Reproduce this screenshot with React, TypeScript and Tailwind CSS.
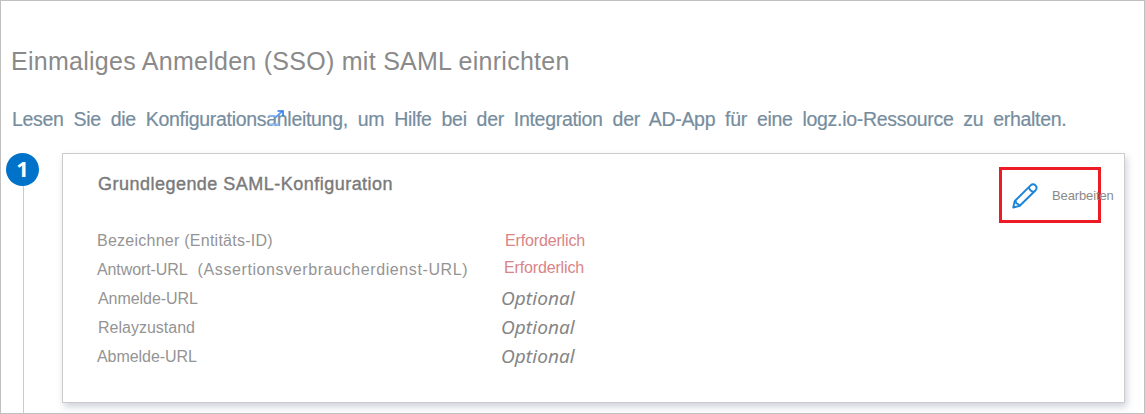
import React from "react";

const rows = [
  { parts: [{ text: "Bezeichner (Entitäts-ID)", className: "tracking-[0.25px]" }], labelClass: "", value: "Erforderlich", required: true, valueClass: "left-px" },
  {
    parts: [
      { text: "Antwort-URL  ", className: "tracking-[-0.1px] [word-spacing:1px]" },
      { text: "(Assertionsverbraucherdienst-URL)", className: "tracking-[0.6px]" },
    ],
    labelClass: "",
    value: "Erforderlich",
    required: true,
    valueClass: "-top-[2px]",
  },
  { parts: [{ text: "Anmelde-URL", className: "tracking-[-0.05px]" }], labelClass: "left-px", value: "Optional", required: false, valueClass: "" },
  { parts: [{ text: "Relayzustand", className: "" }], labelClass: "left-px", value: "Optional", required: false, valueClass: "" },
  { parts: [{ text: "Abmelde-URL", className: "tracking-[-0.05px]" }], labelClass: "", value: "Optional", required: false, valueClass: "" },
];

function PencilIcon() {
  return (
    <svg width="26" height="26" viewBox="0 0 26 26" fill="none" stroke="#1a84d8" strokeWidth="1.9" strokeLinejoin="round">
      <path d="M1.2 24.6 2.8 18 18.6 2.4Q21 .2 23.6 2.4 25.6 4.8 23.6 7.2L7.8 22.8Z" />
      <path d="M2.8 18Q4.3 18.6 4.4 20.4 6.6 20.8 7.8 22.8M16.8 4.2Q17.8 8 21.8 9" />
    </svg>
  );
}

function LinkArrow() {
  return (
    <svg className="absolute top-[108px] left-[266px]" width="18" height="18" viewBox="0 0 18 18" fill="none">
      <path d="M1.5 6.8H8.5M2 15.5H12" stroke="#8ab8f8" strokeWidth="1.8" />
      <path d="M8 8.8 15.5 2" stroke="#5b9df5" strokeWidth="1.8" />
      <path d="M10.5 2H16V7.5" stroke="#2a7be8" strokeWidth="1.6" />
    </svg>
  );
}

export default function App() {
  return (
    <div className="relative flex h-[414px] w-[1145px] flex-col overflow-hidden border border-[#c0c0c0] bg-white font-['Liberation_Sans',Arial,sans-serif] whitespace-nowrap">
      <h1 className="mt-[44px] ml-[10px] h-8 text-[25px] leading-8 text-[#8a8a8a]">
        <span className="tracking-[0.27px]">Einmaliges Anmelden (SSO) mit SAML einrichten</span>
      </h1>
      <p className="mt-[30px] ml-[11px] h-6 text-[19.5px] leading-6 text-[#768d9e]">
        <span className="tracking-[-0.3px] [word-spacing:4.8px] [-webkit-text-stroke:0.2px_#768d9e]">
          Lesen Sie die Konfigurationsanleitung, um Hilfe bei der Integration der AD-App für eine logz.io-Ressource zu erhalten.
        </span>
      </p>
      <LinkArrow />
      <div className="mt-[22px] flex flex-1">
        <div className="ml-[5px] flex w-[33px] flex-col items-center">
          <div className="flex h-[33px] w-[33px] shrink-0 items-center justify-center rounded-full bg-[#0072c9] pb-[3px] font-['Open_Sans',sans-serif] text-[22px] leading-none font-bold text-white">
            1
          </div>
          <div className="ml-[2px] w-px flex-1 bg-[#cccccc]" />
        </div>
        <section className="ml-[23px] flex h-[250px] w-[1063px] flex-col border border-[#cccccc] bg-white shadow-[2px_4px_7px_rgba(70,85,120,0.25)]">
          <div className="flex h-[72px] justify-between">
            <h2 className="mt-[18px] ml-[35px] text-[18px] leading-6 tracking-[0.48px] text-[#7a7a7a] [-webkit-text-stroke:0.4px_#7a7a7a]">
              Grundlegende SAML-Konfiguration
            </h2>
            <button className="mt-[13px] mr-[23px] flex h-[56px] w-[102px] shrink-0 items-center border-[3px] border-[#ed1c24] text-left">
              <span className="ml-[10px] pt-[2px]">
                <PencilIcon />
              </span>
              <span className="ml-[14px] pt-px text-[13px] tracking-[-0.13px] text-[#8a8a8a]">Bearbeiten</span>
            </button>
          </div>
          <div className="flex flex-col pl-[34px]">
            {rows.map((row) => (
              <div key={row.parts[0].text} className="flex h-[29px] items-center text-[16px] leading-[29px]">
                <span className={`relative w-[404px] whitespace-pre text-[#949494] ${row.labelClass}`}>
                  {row.parts.map((part) => (
                    <span key={part.text} className={part.className}>
                      {part.text}
                    </span>
                  ))}
                </span>
                {row.required ? (
                  <span className={`relative ml-[3px] tracking-[-0.15px] text-[#d98486] ${row.valueClass}`}>{row.value}</span>
                ) : (
                  <span className="font-['Open_Sans',sans-serif] text-[19px] tracking-[0.1px] text-[#848484] italic [-webkit-text-stroke:0.1px_#848484]">
                    {row.value}
                  </span>
                )}
              </div>
            ))}
          </div>
        </section>
      </div>
    </div>
  );
}
